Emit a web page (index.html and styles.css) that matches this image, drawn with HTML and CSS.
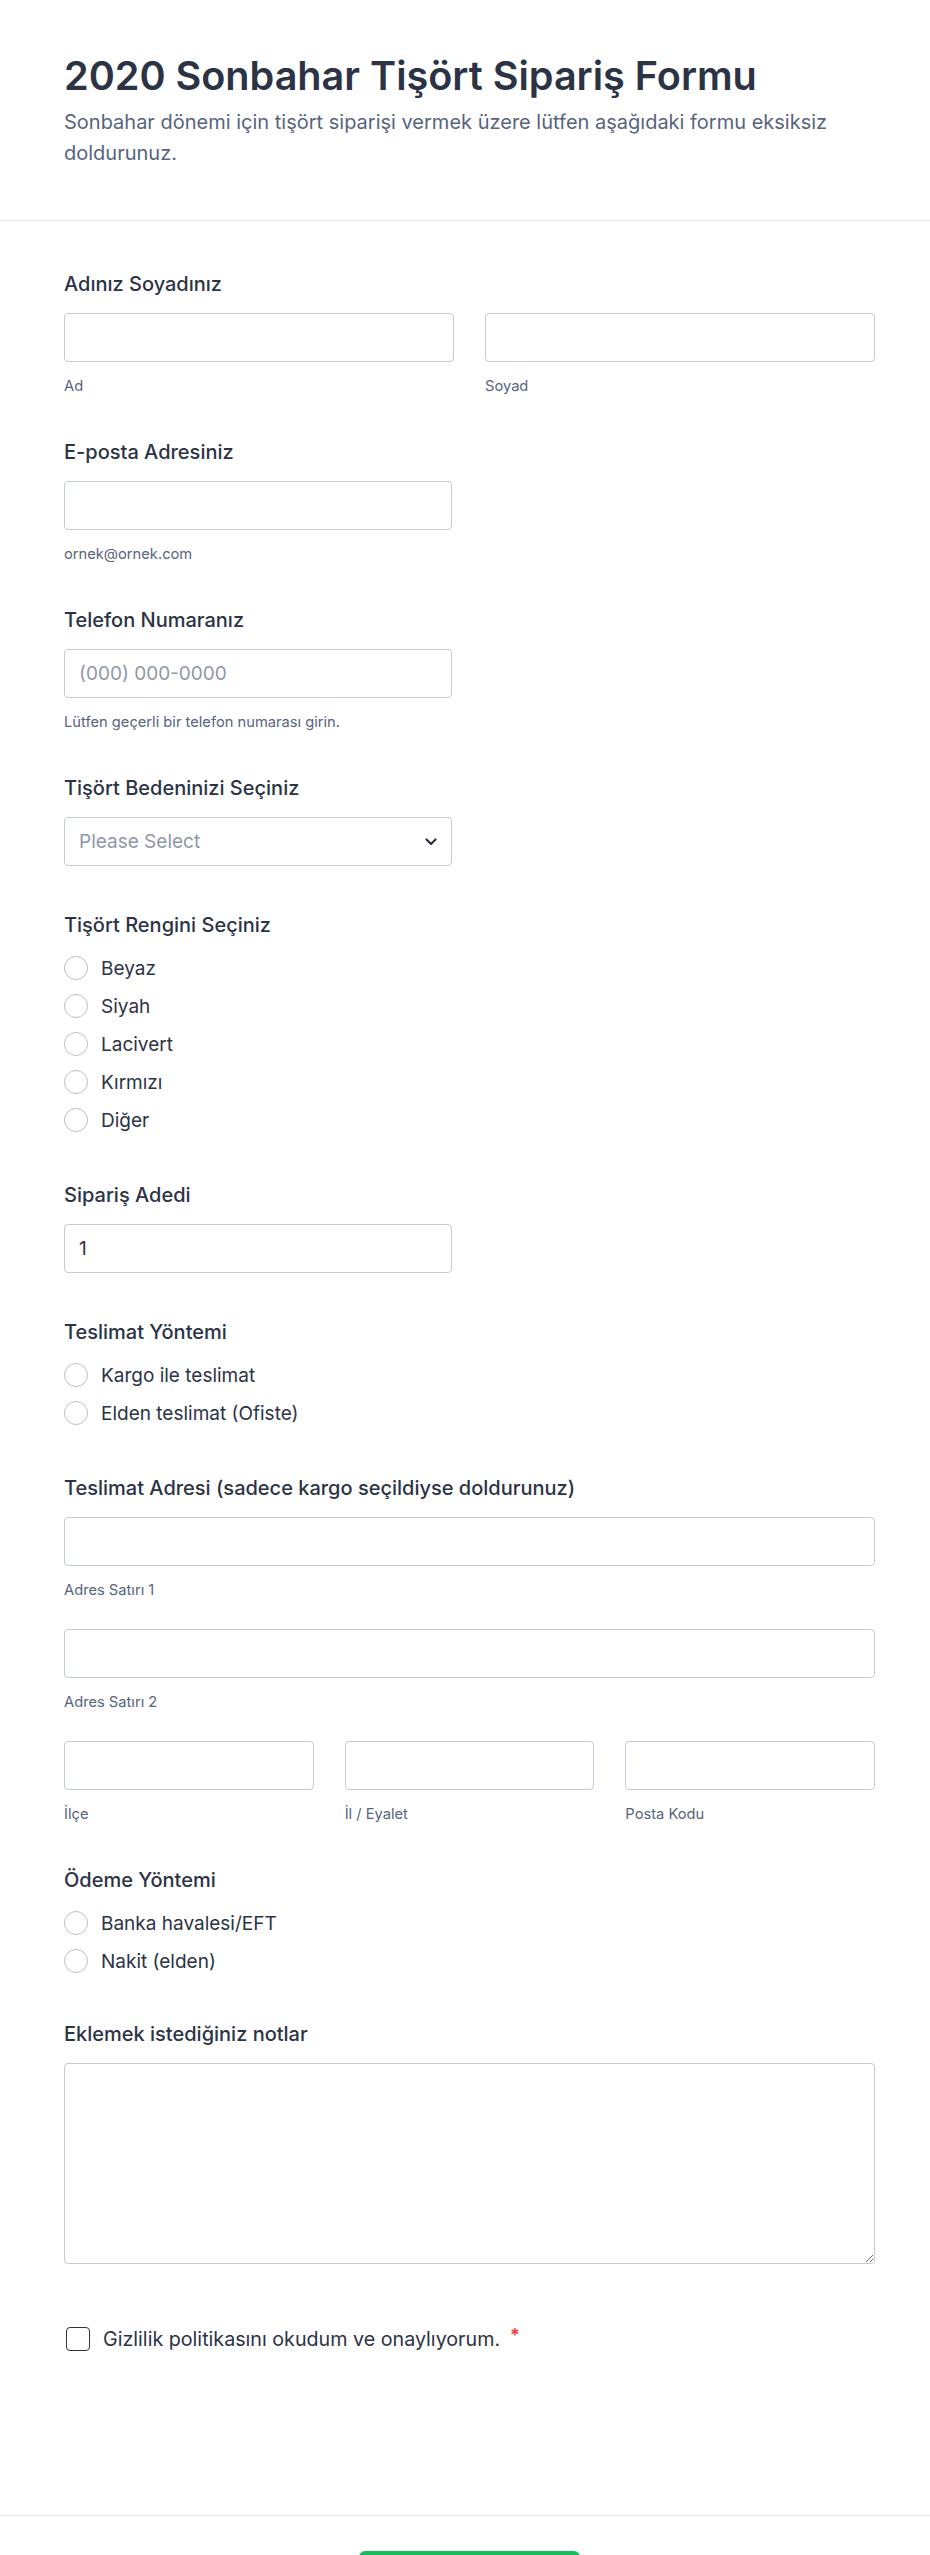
FILE: index.html
```html
<!DOCTYPE html>
<html lang="tr">
<head>
<meta charset="utf-8">
<title>2020 Sonbahar Tişört Sipariş Formu</title>
<link rel="stylesheet" href="styles.css">
</head>
<body>
<header class="header">
  <h1 class="title">2020 Sonbahar Tişört Sipariş Formu</h1>
  <p class="subtitle">Sonbahar dönemi için tişört siparişi vermek üzere lütfen aşağıdaki formu eksiksiz doldurunuz.</p>
</header>

<form class="form">
  <div class="field">
    <label class="label">Adınız Soyadınız</label>
    <div class="row two">
      <div class="col">
        <input class="input" type="text">
        <div class="sub">Ad</div>
      </div>
      <div class="col">
        <input class="input" type="text">
        <div class="sub">Soyad</div>
      </div>
    </div>
  </div>

  <div class="field">
    <label class="label">E-posta Adresiniz</label>
    <div class="half">
      <input class="input" type="email">
      <div class="sub">ornek@ornek.com</div>
    </div>
  </div>

  <div class="field">
    <label class="label">Telefon Numaranız</label>
    <div class="half">
      <input class="input" type="tel" placeholder="(000) 000-0000">
      <div class="sub">Lütfen geçerli bir telefon numarası girin.</div>
    </div>
  </div>

  <div class="field field-plain">
    <label class="label">Tişört Bedeninizi Seçiniz</label>
    <div class="half">
      <div class="select">
        <span class="select-text">Please Select</span>
        <svg class="chevron" width="12" height="8" viewBox="0 0 12 8"><polyline points="1.5,1.5 6,6 10.5,1.5" fill="none" stroke="#2c3345" stroke-width="2.2" stroke-linecap="round" stroke-linejoin="round"/></svg>
      </div>
    </div>
  </div>

  <div class="field field-radio">
    <label class="label">Tişört Rengini Seçiniz</label>
    <div class="radios">
      <label class="radio"><input type="radio" name="renk"><span>Beyaz</span></label>
      <label class="radio"><input type="radio" name="renk"><span>Siyah</span></label>
      <label class="radio"><input type="radio" name="renk"><span>Lacivert</span></label>
      <label class="radio"><input type="radio" name="renk"><span>Kırmızı</span></label>
      <label class="radio"><input type="radio" name="renk"><span>Diğer</span></label>
    </div>
  </div>

  <div class="field field-plain">
    <label class="label">Sipariş Adedi</label>
    <div class="half">
      <input class="input" type="text" value="1">
    </div>
  </div>

  <div class="field field-radio">
    <label class="label">Teslimat Yöntemi</label>
    <div class="radios">
      <label class="radio"><input type="radio" name="teslimat"><span>Kargo ile teslimat</span></label>
      <label class="radio"><input type="radio" name="teslimat"><span>Elden teslimat (Ofiste)</span></label>
    </div>
  </div>

  <div class="field">
    <label class="label">Teslimat Adresi (sadece kargo seçildiyse doldurunuz)</label>
    <div class="addr">
      <div class="col">
        <input class="input" type="text">
        <div class="sub">Adres Satırı 1</div>
      </div>
      <div class="col">
        <input class="input" type="text">
        <div class="sub">Adres Satırı 2</div>
      </div>
      <div class="row three">
        <div class="col">
          <input class="input" type="text">
          <div class="sub">İlçe</div>
        </div>
        <div class="col">
          <input class="input" type="text">
          <div class="sub">İl / Eyalet</div>
        </div>
        <div class="col">
          <input class="input" type="text">
          <div class="sub">Posta Kodu</div>
        </div>
      </div>
    </div>
  </div>

  <div class="field field-radio field-pay">
    <label class="label">Ödeme Yöntemi</label>
    <div class="radios">
      <label class="radio"><input type="radio" name="odeme"><span>Banka havalesi/EFT</span></label>
      <label class="radio"><input type="radio" name="odeme"><span>Nakit (elden)</span></label>
    </div>
  </div>

  <div class="field field-notes">
    <label class="label">Eklemek istediğiniz notlar</label>
    <textarea class="textarea"></textarea>
  </div>

  <div class="consent">
    <label class="check"><input type="checkbox"><span>Gizlilik politikasını okudum ve onaylıyorum.</span><span class="req">*</span></label>
  </div>
</form>

<footer class="footer">
  <div class="submit" role="button" aria-label="Gönder"></div>
</footer>
</body>
</html>
```

FILE: styles.css
```css
* { box-sizing: border-box; }

body {
  margin: 0;
  background: #ffffff;
  font-family: Inter, "Noto Sans", "DejaVu Sans", sans-serif;
  color: #2c3345;
}

.header {
  padding: 52px 55px 51px 64px;
  border-bottom: 1px solid #e3e6ee;
}

.title {
  margin: 0;
  font-size: 39.6px;
  line-height: 48px;
  font-weight: 600;
  color: #2c3345;
}

.subtitle {
  margin: 7px 0 0;
  font-size: 20px;
  line-height: 31px;
  color: #57647e;
}

.form {
  padding: 51px 55px 164px 64px;
}

.field { margin-bottom: 45px; }
.field-plain { margin-bottom: 47px; }
.field-radio { margin-bottom: 46px; }
.field-pay { margin-bottom: 44px; }
.field-notes { margin-bottom: 63px; }

.label {
  display: block;
  font-size: 20px;
  line-height: 24px;
  font-weight: 500;
  color: #2c3345;
  margin-bottom: 17px;
}

.row { display: grid; column-gap: 31px; }
.row.two { grid-template-columns: 1fr 1fr; }
.row.three { grid-template-columns: 1fr 1fr 1fr; }

.half { width: 388px; }

.addr { display: flex; flex-direction: column; gap: 30px; }

.input {
  display: block;
  width: 100%;
  height: 49px;
  margin: 0;
  padding: 0 14px;
  border: 1px solid #c3cad8;
  border-radius: 4px;
  background: #fff;
  font-family: inherit;
  font-size: 19px;
  color: #2c3345;
  outline: none;
}

.input::placeholder { color: #8f97a8; }

.sub {
  margin-top: 15px;
  font-size: 14.7px;
  line-height: 18px;
  color: #57647e;
}

.select {
  display: flex;
  align-items: center;
  justify-content: space-between;
  height: 49px;
  padding: 0 14px;
  border: 1px solid #c3cad8;
  border-radius: 4px;
  background: #fff;
}

.select-text { font-size: 19px; color: #8f97a8; }
.chevron { display: block; }

.radios {
  display: flex;
  flex-direction: column;
  gap: 14px;
  padding-top: 2px;
  padding-bottom: 5px;
}

.radio {
  display: flex;
  align-items: center;
  gap: 13px;
  height: 24px;
  font-size: 19px;
  color: #2c3345;
}

.radio input {
  appearance: none;
  -webkit-appearance: none;
  margin: 0;
  width: 24px;
  height: 24px;
  flex: none;
  border: 1px solid #b8bfcc;
  border-radius: 50%;
  background: #fff;
}

.textarea {
  display: block;
  width: 100%;
  height: 201px;
  margin: 0;
  padding: 12px 14px;
  border: 1px solid #c3cad8;
  border-radius: 4px;
  font-family: inherit;
  font-size: 19px;
  resize: vertical;
  outline: none;
}

.check {
  display: flex;
  align-items: center;
  height: 24px;
  font-size: 19.7px;
  color: #2c3345;
}

.check input {
  appearance: none;
  -webkit-appearance: none;
  margin: 0 13px 0 2px;
  width: 24px;
  height: 24px;
  flex: none;
  border: 1.5px solid #2c3345;
  border-radius: 4px;
  background: #fff;
}

.req {
  margin-left: 10px;
  color: #f23a3c;
  font-size: 18px;
  font-weight: 600;
  align-self: flex-start;
  line-height: 18px;
}

.footer {
  border-top: 1px solid #e3e6ee;
  padding: 35px 55px 40px 64px;
  display: flex;
  justify-content: center;
}

.submit {
  width: 221px;
  height: 48px;
  border-radius: 6px;
  background: #18bd5b;
}
```
